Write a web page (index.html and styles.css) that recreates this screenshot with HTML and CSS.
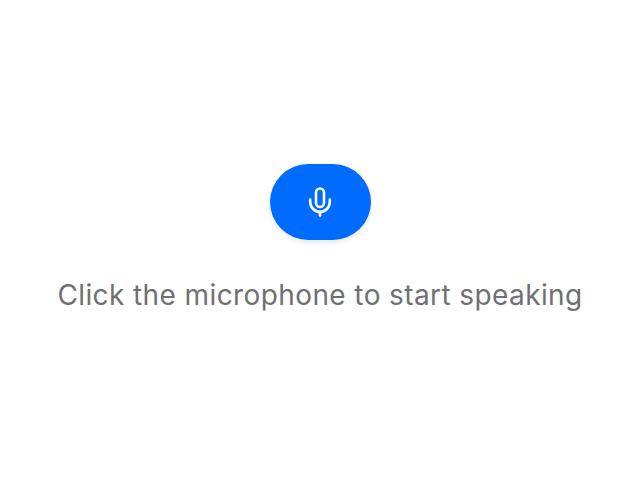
FILE: index.html
```html
<!DOCTYPE html>
<html lang="en">
<head>
<meta charset="utf-8">
<title>Speak</title>
<link rel="stylesheet" href="styles.css">
</head>
<body>
<main class="page">
  <button class="mic" type="button" aria-label="Start speaking">
    <svg class="mic-icon" viewBox="0 0 24 30" width="24" height="30" fill="none" stroke="#fff" stroke-width="2.6" stroke-linecap="round" stroke-linejoin="round">
      <rect x="8" y="1.5" width="8" height="18.5" rx="4"/>
      <path d="M2.2 12.5v2.6a9.8 9.8 0 0 0 19.6 0v-2.6"/>
      <path d="M12 25v3.6"/>
    </svg>
  </button>
  <p class="hint">Click the microphone to start speaking</p>
</main>
</body>
</html>
```
FILE: styles.css
```css
html, body {
  margin: 0;
  height: 100%;
  background: #fff;
}
.page {
  box-sizing: border-box;
  height: 480px;
  padding-top: 164px;
  display: flex;
  flex-direction: column;
  align-items: center;
}
.mic {
  width: 101px;
  height: 76px;
  border: 0;
  padding: 0;
  border-radius: 38px;
  background: #006cff;
  box-shadow: 0 2px 6px rgba(0, 0, 0, 0.1);
  display: flex;
  align-items: center;
  justify-content: center;
}
.hint {
  margin: 38px 0 0;
  font-family: Inter, "Liberation Sans", sans-serif;
  font-size: 28px;
  line-height: 34px;
  letter-spacing: 0.4px;
  color: #707072;
  white-space: nowrap;
}
```
